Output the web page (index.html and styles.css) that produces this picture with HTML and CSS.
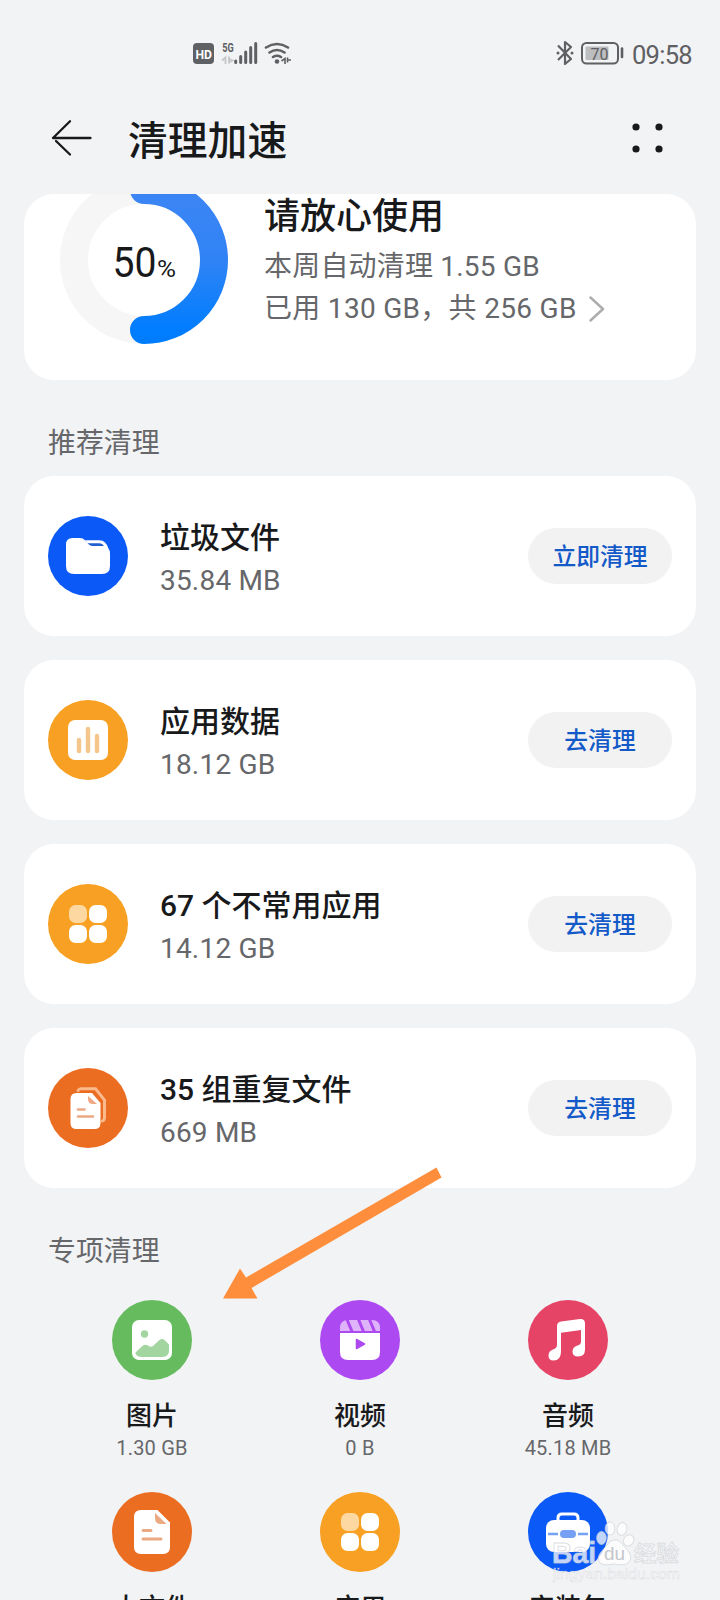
FILE: index.html
```html
<!DOCTYPE html>
<html lang="zh-CN">
<head>
<meta charset="utf-8">
<title>清理加速</title>
<link rel="stylesheet" href="styles.css">
</head>
<body>
<svg class="defs" width="0" height="0" aria-hidden="true">
  <symbol id="apps" viewBox="0 0 80 80">
    <circle cx="40" cy="40" r="40" fill="#f8a023"/>
    <rect x="21" y="21" width="18" height="18" rx="6.500" fill="#fdd8a0"/>
    <rect x="41" y="21" width="18" height="18" rx="6.500" fill="#fff"/>
    <rect x="21" y="41" width="18" height="18" rx="6.500" fill="#fff"/>
    <rect x="41" y="41" width="18" height="18" rx="6.500" fill="#fff"/>
  </symbol>
</svg>
<div class="screen">
  <header class="status">
    <svg class="signals" width="102" height="26" viewBox="190 40 102 26">
      <rect x="193" y="43" width="21" height="21" rx="4" fill="#5f6063"/>
      <text class="hd" x="195.500" y="58.800" textLength="16.500" lengthAdjust="spacingAndGlyphs">HD</text>
      <text class="fiveg" x="222.300" y="51.800" textLength="11.500" lengthAdjust="spacingAndGlyphs">5G</text>
      <path d="M222 60.500l3.500-3v6.500M229 56.500v7M229.500 59l3 1.500-3 1.500" fill="none" stroke="#c5c6c8" stroke-width="1.800"/>
      <path d="M235.700 61v1.500M240.700 56.500v6M245.700 52v10.500M250.700 47.500v15M255.700 43.500v19" stroke="#5f6063" stroke-width="3" stroke-linecap="round"/>
      <path d="M266 47.500q11-7 22 0M269.500 52.500q7.500-5 15 0M273 57q4-2.500 8 0" fill="none" stroke="#5f6063" stroke-width="2.600" stroke-linecap="round"/>
      <circle cx="277" cy="61.500" r="2.300" fill="#5f6063"/>
      <path d="M281.500 61l3.500-2.500v5.500M287.500 57.500v5M288 60h3" fill="none" stroke="#5f6063" stroke-width="1.600"/>
    </svg>
    <div class="status-right">
      <svg width="18" height="26" viewBox="0 0 18 26">
        <path d="M2 5.500L15 19 9 24V2l6 5L2 20" fill="none" stroke="#5f6063" stroke-width="2.200" stroke-linejoin="round"/>
        <circle cx="2" cy="13" r="1.500" fill="#5f6063"/><circle cx="16" cy="13" r="1.500" fill="#5f6063"/>
      </svg>
      <svg class="battery" width="43" height="23" viewBox="0 0 43 23">
        <rect x="1" y="1" width="36" height="20.500" rx="4.500" fill="none" stroke="#5f6063" stroke-width="2"/>
        <rect x="4.500" y="4.500" width="23" height="13.500" rx="1" fill="#bcbdbf"/>
        <path d="M41 6.500v8.500" stroke="#5f6063" stroke-width="2.600" stroke-linecap="round"/>
        <text class="level" x="9.500" y="17.500" textLength="18" lengthAdjust="spacingAndGlyphs">70</text>
      </svg>
      <span class="time">09:58</span>
    </div>
  </header>

  <div class="titlebar">
    <svg width="42" height="38" viewBox="0 0 42 38">
      <path d="M39.500 19H2M19 2.200L2 19M5 22L19 35.500" fill="none" stroke="#18191b" stroke-width="2.300" stroke-linecap="round"/>
    </svg>
    <h1 class="title">清理加速</h1>
    <svg class="more" width="32" height="30" viewBox="0 0 32 30" fill="#18191b">
      <circle cx="4" cy="4" r="3.600"/><circle cx="27" cy="4" r="3.600"/><circle cx="4" cy="26" r="3.600"/><circle cx="27" cy="26" r="3.600"/>
    </svg>
  </div>

  <section class="card summary">
    <svg class="ring" width="168" height="168" viewBox="0 0 168 168">
      <linearGradient id="arc" x1="0" y1="0" x2="0" y2="1"><stop offset="0" stop-color="#3d85f5"/><stop offset=".5" stop-color="#3083f5"/><stop offset="1" stop-color="#007dfe"/></linearGradient>
      <circle cx="84" cy="84" r="70" fill="none" stroke="#f6f6f7" stroke-width="28"/>
      <path d="M84 14a70 70 0 0 1 0 140" fill="none" stroke="url(#arc)" stroke-width="28" stroke-linecap="round"/>
      <text class="pct" x="52.500" y="100.500" textLength="44" lengthAdjust="spacingAndGlyphs">50</text>
      <text class="sign" x="97" y="100.500" textLength="19" lengthAdjust="spacingAndGlyphs">%</text>
    </svg>
    <div class="summary-text">
      <h2 class="headline">请放心使用</h2>
      <p class="line">本周自动清理 1.55 GB</p>
      <p class="line used">已用 130 GB，共 256 GB
        <svg width="16" height="28" viewBox="0 0 16 28"><path d="M1.500 2.500L14 14 1.500 25.500" fill="none" stroke="#adadaf" stroke-width="2.500" stroke-linecap="round" stroke-linejoin="round"/></svg></p>
    </div>
  </section>

  <h3 class="section">推荐清理</h3>
  <div class="list">
    <article class="card row">
      <svg class="icon" viewBox="0 0 80 80">
        <circle cx="40" cy="40" r="40" fill="#0b59f7"/>
        <path d="M37 24.200h14.500q6.500 0 9 8.500H44z" fill="#fff"/>
        <path d="M39.500 27.200h11.500q3.500 0 5 3H42.500z" fill="#1f5fd0"/>
        <path d="M24.500 22H32q3 0 5 2.200l3.500 4q1.500 1.800 4 1.800H54q8 0 8 8v12q0 8-8 8H26q-8 0-8-8V28.500q0-6.500 6.500-6.500z" fill="#fff"/>
      </svg>
      <div class="info"><h4 class="name">垃圾文件</h4><p class="size">35.84 MB</p></div>
      <button class="action">立即清理</button>
    </article>
    <article class="card row">
      <svg class="icon" viewBox="0 0 80 80">
        <circle cx="40" cy="40" r="40" fill="#f8a023"/>
        <rect x="20" y="20" width="40" height="40" rx="7" fill="#fff"/>
        <path d="M31 40v11M40 29v22M49 36v15" stroke="#f4c68c" stroke-width="4.400" stroke-linecap="round"/>
      </svg>
      <div class="info"><h4 class="name">应用数据</h4><p class="size">18.12 GB</p></div>
      <button class="action">去清理</button>
    </article>
    <article class="card row">
      <svg class="icon"><use href="#apps"/></svg>
      <div class="info"><h4 class="name">67 个不常用应用</h4><p class="size">14.12 GB</p></div>
      <button class="action">去清理</button>
    </article>
    <article class="card row">
      <svg class="icon" viewBox="0 0 80 80">
        <circle cx="40" cy="40" r="40" fill="#eb6d22"/>
        <path d="M30 22.500q1-1.800 3-1.800h14.500l9 11.500V50q0 2-2 3" fill="none" stroke="#fbb98e" stroke-width="3" stroke-linecap="round"/>
        <path d="M28.500 25H44l8.500 10v20q0 6-6 6h-18q-6 0-6-6V31q0-6 6-6z" fill="#fff"/>
        <path d="M40 28l9 8h-4q-5 0-5-5z" fill="#eea983"/>
        <path d="M30 41.500h6.500M30 48.500h15" stroke="#eba983" stroke-width="2.600" stroke-linecap="round"/>
      </svg>
      <div class="info"><h4 class="name">35 组重复文件</h4><p class="size">669 MB</p></div>
      <button class="action">去清理</button>
    </article>
  </div>

  <h3 class="section special">专项清理</h3>
  <div class="grid">
    <div class="tile">
      <svg class="icon" viewBox="0 0 80 80">
        <circle cx="40" cy="40" r="40" fill="#66bb5e"/>
        <rect x="20" y="20" width="40" height="40" rx="7" fill="#fff"/>
        <circle cx="32.500" cy="34" r="3.700" fill="#a2d59f"/>
        <path d="M24 52l7-6.500q2.500-1.500 5 0 3 2.500 5.500 0l6-5.500q3-2 5.500.5l4 4v6q0 6.500-6.500 6.500H30q-5 0-6.500-3.500-.3-.7.500-1.500z" fill="#a2d59f"/>
      </svg>
      <b class="tile-name">图片</b><span class="tile-size">1.30 GB</span>
    </div>
    <div class="tile">
      <svg class="icon" viewBox="0 0 80 80">
        <circle cx="40" cy="40" r="40" fill="#ac49f0"/>
        <path d="M20 31v-3q0-8 8-8h24q8 0 8 8v3z" fill="#dfb3fa"/>
        <path d="M27 19.500l5 12M38.500 19.500l5 12M49.500 19.500l5 12" stroke="#ac49f0" stroke-width="3"/>
        <path d="M20 33h40v19q0 8-8 8H28q-8 0-8-8z" fill="#fff"/>
        <path d="M36.500 39.500l8 4.500-8 4.500z" fill="#ac49f0" stroke="#ac49f0" stroke-width="1.500" stroke-linejoin="round"/>
      </svg>
      <b class="tile-name">视频</b><span class="tile-size">0 B</span>
    </div>
    <div class="tile">
      <svg class="icon" viewBox="0 0 80 80">
        <circle cx="40" cy="40" r="40" fill="#e54467"/>
        <path d="M29 26q0-4 4-4.500l19-2.500q5-.5 5 4.500v26q0 7-7 7-5.500 0-5.500-5 0-4.500 5-6 3.500-1 3.500-4V30l-20 2.700v18.800q0 9-7.500 9-5 0-5-5 0-4.500 4.500-6 4-1 4-5z" fill="#fff"/>
      </svg>
      <b class="tile-name">音频</b><span class="tile-size">45.18 MB</span>
    </div>
    <div class="tile">
      <svg class="icon" viewBox="0 0 80 80">
        <circle cx="40" cy="40" r="40" fill="#eb6d22"/>
        <path d="M29 18h16.500L58 30.500V55q0 7-7 7H29q-7 0-7-7V25q0-7 7-7z" fill="#fff"/>
        <path d="M43 21l11.500 11H49q-6 0-6-6z" fill="#eba983"/>
        <path d="M31 38.500h8M31 47h18" stroke="#eba983" stroke-width="3" stroke-linecap="round"/>
      </svg>
      <b class="tile-name">大文件</b>
    </div>
    <div class="tile">
      <svg class="icon"><use href="#apps"/></svg>
      <b class="tile-name">应用</b>
    </div>
    <div class="tile">
      <svg class="icon" viewBox="0 0 80 80">
        <circle cx="40" cy="40" r="40" fill="#0b59f7"/>
        <path d="M30 30v-4q0-4 4-4h12q4 0 4 4v4" fill="none" stroke="#fff" stroke-width="3"/>
        <rect x="18" y="28" width="44" height="32" rx="8" fill="#fff"/>
        <path d="M20 42h10M50 42h10" stroke="#76a0f4" stroke-width="2.600"/>
        <rect x="32" y="38" width="16" height="8" rx="4" fill="#76a0f4"/>
      </svg>
      <b class="tile-name">安装包</b>
    </div>
  </div>

  <svg class="pointer" width="222" height="136" viewBox="220 1164 222 136">
    <path d="M223 1298.500L240 1268.500 246 1277.500 436.500 1167.500 441.500 1177.500 251.500 1288 257.500 1298.500z" fill="#ff8e3c"/>
  </svg>

  <svg class="watermark" width="140" height="68" viewBox="548 1516 140 68">
    <g fill="#fff" fill-opacity=".75" stroke="#cfd1d5" stroke-opacity=".7" stroke-width="1">
      <ellipse cx="601.500" cy="1538" rx="4.800" ry="6.500"/><ellipse cx="610" cy="1528.500" rx="4.800" ry="6.500"/><ellipse cx="622" cy="1529" rx="4.800" ry="6.500" transform="rotate(12 622 1529)"/><ellipse cx="629" cy="1540.500" rx="5" ry="5.800" transform="rotate(35 629 1540)"/>
      <path d="M614 1540q5-1 9 5l6 7q4 7-1 11-4 3-14 1-10 2-14-1-4-5 1-11l6-7q3-5 7-5z"/>
      <text class="mark" x="552" y="1562.500" textLength="44" lengthAdjust="spacingAndGlyphs">Bai</text>
      <text class="mark-cjk" x="634" y="1561" textLength="45" lengthAdjust="spacingAndGlyphs">经验</text>
      <text class="mark-url" x="553" y="1579" textLength="127" lengthAdjust="spacingAndGlyphs">jingyan.baidu.com</text>
    </g>
    <text class="mark-du" x="604" y="1560" textLength="21" lengthAdjust="spacingAndGlyphs">du</text>
  </svg>
</div>
</body>
</html>
```

FILE: styles.css
```css
* { box-sizing: border-box; margin: 0; padding: 0; }
html, body { height: 1600px; overflow: hidden; }
body { font-family: Roboto, "Noto Sans CJK SC", sans-serif; background: #f2f3f5; color: #18191b; }
svg { display: block; flex: none; }
.defs { position: absolute; }
.screen { position: relative; width: 720px; height: 1600px; overflow: hidden; padding: 0 24px; display: flex; flex-direction: column; }

.status { height: 106px; flex: none; display: flex; justify-content: space-between; padding: 0 4px 0 166px; }
.signals { margin-top: 40px; }
.status-right { display: flex; align-items: center; height: 26px; margin-top: 40px; }
.battery { margin-left: 7px; }
.time { font-size: 25.500px; line-height: 26px; letter-spacing: -.7px; color: #5f6063; margin-left: 8px; padding-top: 4px; white-space: nowrap; }
.hd { font: 700 13.500px Roboto, sans-serif; fill: #fff; }
.fiveg { font: 700 12.500px Roboto, sans-serif; fill: #5f6063; }
.level { font: 400 17px Roboto, sans-serif; fill: #5f6063; }

.titlebar { height: 88px; flex: none; display: flex; align-items: flex-start; padding: 13px 32px 0 27px; }
.title { font-size: 39.800px; line-height: 40px; font-weight: 500; margin: 3px 0 0 35px; white-space: nowrap; }
.more { margin: 4px 0 0 auto; }

.card { background: #fff; border-radius: 30px; flex: none; }
.summary { height: 186px; overflow: hidden; display: flex; padding-left: 36px; }
.ring { margin-top: -18px; }
.pct { font: 400 42px Roboto, sans-serif; fill: #18191b; }
.sign { font: 400 24px Roboto, sans-serif; fill: #18191b; }
.summary-text { margin-left: 36px; padding-top: 2px; white-space: nowrap; }
.headline { font-size: 36px; line-height: 42px; font-weight: 500; }
.line { font-size: 28px; line-height: 42px; letter-spacing: .2px; color: #66676a; }
.headline + .line { margin-top: 8px; }
.used { display: flex; align-items: center; gap: 12px; letter-spacing: .3px; }

.section { height: 96px; flex: none; padding: 44px 24px 0; font-size: 27.900px; line-height: 40px; font-weight: 400; color: #66676a; }
.list { display: flex; flex-direction: column; gap: 24px; flex: none; }
.row { height: 160px; display: flex; align-items: center; padding: 0 24px; }
.icon { width: 80px; height: 80px; }
.info { margin-left: 32px; padding-top: 5px; flex: 1; white-space: nowrap; }
.name { font-size: 30px; line-height: 43px; font-weight: 500; }
.size { font-size: 28px; line-height: 43px; letter-spacing: .2px; color: #66676a; }
.action { width: 144px; height: 56px; border: 0; border-radius: 28px; background: #f2f2f3; color: #1459c8; font-family: inherit; font-size: 23.800px; font-weight: 500; line-height: 54px; padding-top: 2px; }

.special { height: 112px; }
.grid { display: grid; grid-template-columns: repeat(3, 208px); grid-auto-rows: 192px; padding-left: 24px; flex: none; }
.tile { display: flex; flex-direction: column; align-items: center; white-space: nowrap; }
.tile-name { font-size: 26px; line-height: 36px; font-weight: 500; margin-top: 18px; }
.tile-size { font-size: 20px; line-height: 28px; letter-spacing: .2px; color: #66676a; }

.pointer { position: absolute; left: 220px; top: 1164px; }
.watermark { position: absolute; left: 548px; top: 1516px; }
.mark { font: 700 29px "Liberation Sans", sans-serif; }
.mark-cjk { font: 500 22px "Noto Sans CJK SC", sans-serif; }
.mark-url { font: 400 15px "Liberation Sans", sans-serif; stroke-width: .5px; }
.mark-du { font: 400 18px "Liberation Sans", sans-serif; fill: #c3c6cb; }
```
